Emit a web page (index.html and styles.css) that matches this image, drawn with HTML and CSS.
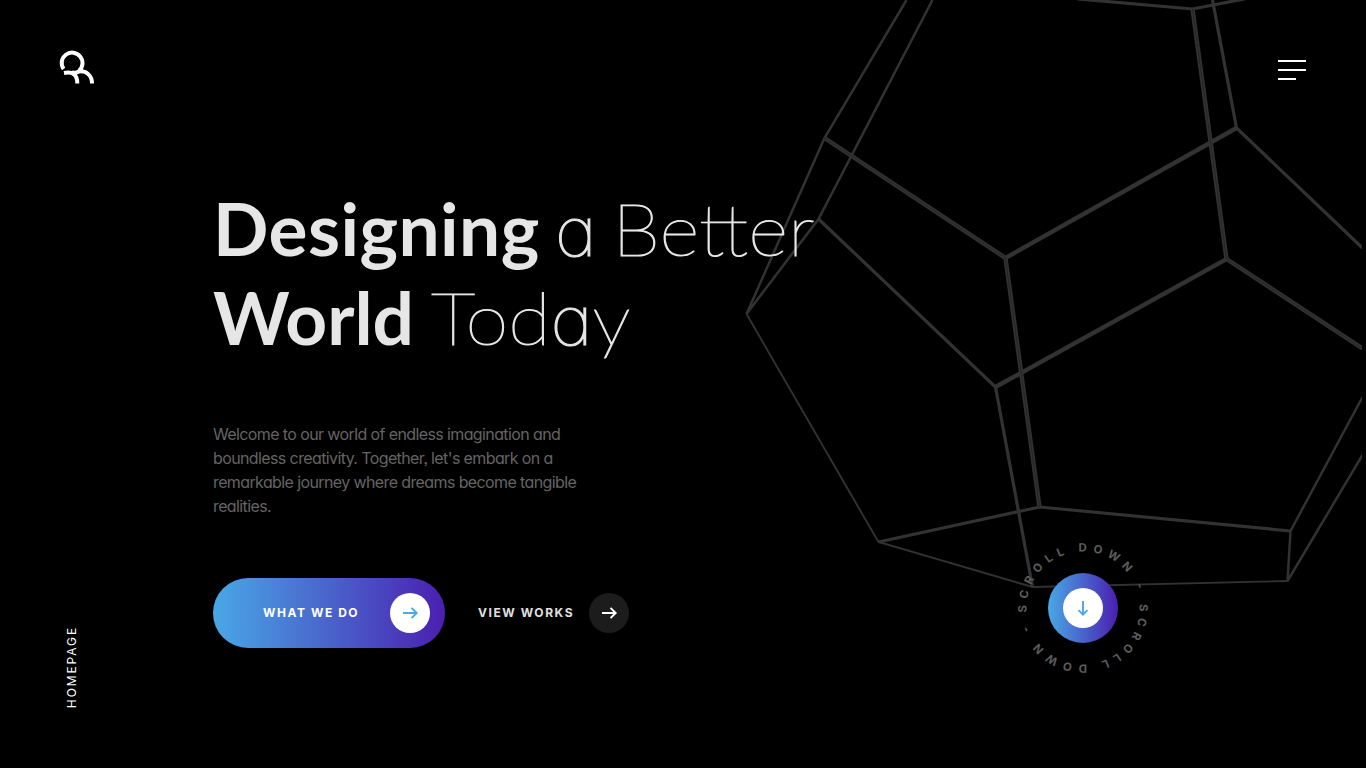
FILE: index.html
```html
<!DOCTYPE html>
<html lang="en">
<head>
<meta charset="utf-8">
<title>Homepage</title>
<link rel="stylesheet" href="styles.css">
</head>
<body>
<main class="page">
  <svg class="wire" viewBox="0.5 0 1362 768" aria-hidden="true">
    <g class="fine"><path d="M747 314 879 542 1033 587 1288 581"/></g>
    <g class="thin"><path d="M907 0 825 138 747 314 819 219 933 0M1363 455 1288 581 1291 531 1363 397"/></g>
    <g class="mid"><path d="M1213 0 1237 128 1363 248M819 219 996 387 1033 587M879 542 1040 507 1291 531M1078 -1 1193 9 1245 -1"/></g>
    <g class="thick"><path d="M825 138 1006 258 1237 128M1006 258 1040 507M996 387 1227 259 1363 348.500M1193 9 1227 259"/></g>
    <g class="groove"><path d="M825 138 1006 258 1040 507M1193 9 1227 259 1363 348.500"/></g>
  </svg>
  <header class="top">
    <svg class="logo" viewBox="0 0 36 36"><path d="M4.600 19A10.400 10.400 0 1 1 20 20.800M5 23Q18.500 20.500 18.300 33.500M13 22Q17 23.500 20 21.500C27 20.500 33.200 25.500 33 33.500"/></svg>
    <div class="menu"><i></i><i></i><i></i></div>
  </header>
  <section class="hero">
    <h1><span class="row"><b class="first">Designing</b> <span class="light better"><span class="alt">a</span> Better</span></span><span class="row"><b>World</b> <span class="light today">Tod<span class="alt">a</span>y</span></span></h1>
    <p>Welcome to our world of endless imagination and<br>boundless creativity. Together, let's embark on a<br>remarkable journey where dreams become tangible<br>realities.</p>
    <div class="actions">
      <a class="pill"><span>WHAT WE DO</span><svg class="disc" viewBox="0 0 40 40"><path d="M13 20H27M21.500 14.800 26.700 20 21.500 25.200"/></svg></a>
      <a class="link"><span>VIEW WORKS</span><svg class="disc dark" viewBox="0 0 40 40"><path d="M13 20H27M21.500 14.800 26.700 20 21.500 25.200"/></svg></a>
    </div>
  </section>
  <div class="side">HOMEPAGE</div>
  <div class="scroll">
    <svg class="ring" viewBox="0 0 140 140">
      <path id="orbit" fill="none" d="M13.670 74.400A56.500 56.500 0 0 1 126.330 65.600A56.500 56.500 0 0 1 13.670 74.400"/>
      <text><textPath href="#orbit" textLength="341">SCROLL DOWN - SCROLL DOWN -</textPath></text>
    </svg>
    <div class="ball"><svg class="disc" viewBox="0 0 40 40"><path d="M20 13V27M15.500 22.200 20 26.700 24.500 22.200"/></svg></div>
  </div>
</main>
</body>
</html>
```
FILE: styles.css
```css
*{box-sizing:border-box}
body{margin:0;background:#000;color:#fff;font-family:Inter,sans-serif;font-feature-settings:"cv11" 1,"ss03" 1}
.page{position:relative;width:1366px;height:768px;overflow:hidden;display:flex;flex-direction:column}
.wire{position:absolute;left:0;top:0;width:1362px;height:768px;fill:none;stroke:#323232;overflow:hidden}
.fine{stroke-width:1.9}
.thin{stroke-width:2.5}
.mid{stroke-width:3.2}
.thick{stroke-width:4.4}
.groove{stroke:#202020;stroke-width:.7}
.top{position:relative;display:flex;justify-content:space-between;padding:50px 60px 0 59px;height:200px}
.logo{width:36px;height:36px;fill:none;stroke:#fff;stroke-width:4}
.menu{display:flex;flex-direction:column;gap:7px;padding-top:10px;width:28px}
.menu i{height:2px;background:#fff}
.menu i:last-child{width:18px}
.hero{position:relative;padding-left:213px}
h1{margin:-16px 0 0;font-family:Lato,sans-serif;font-size:73px;line-height:89px;font-weight:100;color:#e6e6e6}
.row{display:block;height:89px;white-space:nowrap}
.light{display:inline-block;transform-origin:0 50%;-webkit-text-stroke:1.1px #e6e6e6}
.better{margin-left:-6px;word-spacing:-6px;transform:scaleX(1.055)}
.today{margin-left:-4px;transform:scaleX(1.065)}
.alt{font-family:Inter,sans-serif;font-size:68px;line-height:1;font-weight:100}
b{font-weight:700}
.first{letter-spacing:.45px}
p{margin:60px 0 0;font-size:16px;line-height:24px;letter-spacing:-.61px;color:#646464;white-space:nowrap}
.actions{display:flex;margin-top:60px;align-items:center}
.actions span{font-size:12px;font-weight:700;letter-spacing:1.55px;white-space:nowrap;padding-bottom:1px}
.pill{width:232px;height:70px;border-radius:35px;background:linear-gradient(90deg,#49a8e6,#4a1fb0);display:flex;align-items:center;justify-content:space-between;padding:0 15px 0 50px}
.link{width:151px;margin-left:33px;display:flex;align-items:center;justify-content:space-between;color:#e0e0e0}
.disc{display:block;width:40px;height:40px;border-radius:50%;background:#fff;fill:none;stroke:#49a8e6;stroke-width:1.9;flex:none}
.dark{background:#1c1c1c;stroke:#fff}
.side{position:absolute;left:64px;bottom:60px;writing-mode:vertical-rl;transform:rotate(180deg);font-size:12px;line-height:16px;letter-spacing:1.900px}
.scroll{position:absolute;left:1013px;top:538px;width:140px;height:140px;display:grid;place-items:center}
.ring{grid-area:1/1;width:140px;height:140px}
.ring text{font-size:11.500px;font-weight:700;fill:#5c5c5c}
.ball{grid-area:1/1;width:70px;height:70px;border-radius:50%;background:linear-gradient(90deg,#49a8e6,#4a1fb0);display:grid;place-items:center}
```
